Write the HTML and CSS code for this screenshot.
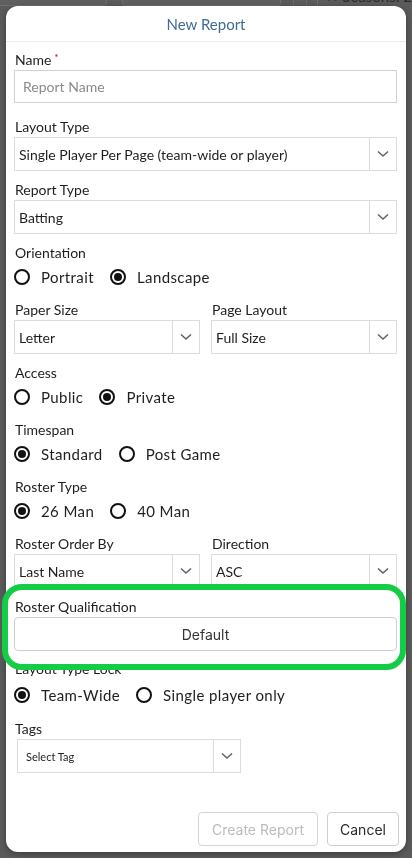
FILE: index.html
```html
<!DOCTYPE html>
<html>
<head>
<meta charset="utf-8">
<link rel="stylesheet" href="styles.css">
</head>
<body>
<div class="page">
  <div class="toolbar">
    <div class="tb-box tb-a"></div>
    <div class="tb-box tb-b"></div>
    <div class="tb-sep"></div>
    <div class="tb-sep"></div>
    <div class="tb-chip">✕ Seasons: 2</div>
  </div>
</div>

<div class="modal">
  <div class="modal-header">New Report</div>
  <div class="modal-body">
    <div class="field field-name">
      <label class="label">Name<span class="req">*</span></label>
      <input class="input" type="text" placeholder="Report Name">
    </div>

    <div class="field">
      <label class="label">Layout Type</label>
      <div class="select">
        <span class="select-value">Single Player Per Page (team-wide or player)</span>
        <span class="select-arrow"><svg width="12" height="8" viewBox="0 0 12 8"><path d="M1 1.5 L6 6 L11 1.5" fill="none" stroke="#5d6572" stroke-width="1.6"/></svg></span>
      </div>
    </div>

    <div class="field">
      <label class="label">Report Type</label>
      <div class="select">
        <span class="select-value">Batting</span>
        <span class="select-arrow"><svg width="12" height="8" viewBox="0 0 12 8"><path d="M1 1.5 L6 6 L11 1.5" fill="none" stroke="#5d6572" stroke-width="1.6"/></svg></span>
      </div>
    </div>

    <div class="field radio-field">
      <label class="label">Orientation</label>
      <div class="radios">
        <span class="radio"><span class="dot"></span>Portrait</span>
        <span class="radio on"><span class="dot"></span>Landscape</span>
      </div>
    </div>

    <div class="field two">
      <div class="col">
        <label class="label">Paper Size</label>
        <div class="select">
          <span class="select-value">Letter</span>
          <span class="select-arrow"><svg width="12" height="8" viewBox="0 0 12 8"><path d="M1 1.5 L6 6 L11 1.5" fill="none" stroke="#5d6572" stroke-width="1.6"/></svg></span>
        </div>
      </div>
      <div class="col">
        <label class="label">Page Layout</label>
        <div class="select">
          <span class="select-value">Full Size</span>
          <span class="select-arrow"><svg width="12" height="8" viewBox="0 0 12 8"><path d="M1 1.5 L6 6 L11 1.5" fill="none" stroke="#5d6572" stroke-width="1.6"/></svg></span>
        </div>
      </div>
    </div>

    <div class="field radio-field">
      <label class="label">Access</label>
      <div class="radios">
        <span class="radio"><span class="dot"></span>Public</span>
        <span class="radio on"><span class="dot"></span>Private</span>
      </div>
    </div>

    <div class="field radio-field">
      <label class="label">Timespan</label>
      <div class="radios">
        <span class="radio on"><span class="dot"></span>Standard</span>
        <span class="radio"><span class="dot"></span>Post Game</span>
      </div>
    </div>

    <div class="field radio-field">
      <label class="label">Roster Type</label>
      <div class="radios">
        <span class="radio on"><span class="dot"></span>26 Man</span>
        <span class="radio"><span class="dot"></span>40 Man</span>
      </div>
    </div>

    <div class="field two">
      <div class="col">
        <label class="label">Roster Order By</label>
        <div class="select">
          <span class="select-value">Last Name</span>
          <span class="select-arrow"><svg width="12" height="8" viewBox="0 0 12 8"><path d="M1 1.5 L6 6 L11 1.5" fill="none" stroke="#5d6572" stroke-width="1.6"/></svg></span>
        </div>
      </div>
      <div class="col">
        <label class="label">Direction</label>
        <div class="select">
          <span class="select-value">ASC</span>
          <span class="select-arrow"><svg width="12" height="8" viewBox="0 0 12 8"><path d="M1 1.5 L6 6 L11 1.5" fill="none" stroke="#5d6572" stroke-width="1.6"/></svg></span>
        </div>
      </div>
    </div>

    <div class="field field-qual">
      <label class="label">Roster Qualification</label>
      <button class="btn btn-block">Default</button>
    </div>

    <div class="field radio-field field-lock">
      <label class="label">Layout Type Lock</label>
      <div class="radios">
        <span class="radio on"><span class="dot"></span>Team-Wide</span>
        <span class="radio"><span class="dot"></span>Single player only</span>
      </div>
    </div>

    <div class="field field-tags">
      <label class="label">Tags</label>
      <div class="select select-tags">
        <span class="select-value">Select Tag</span>
        <span class="select-arrow"><svg width="12" height="8" viewBox="0 0 12 8"><path d="M1 1.5 L6 6 L11 1.5" fill="none" stroke="#5d6572" stroke-width="1.6"/></svg></span>
      </div>
    </div>
  </div>
  <div class="modal-footer">
    <button class="btn btn-disabled">Create Report</button>
    <button class="btn">Cancel</button>
  </div>
  <div class="highlight"></div>
</div>
</body>
</html>
```

FILE: styles.css
```css
* { box-sizing: border-box; }
html, body {
  margin: 0;
  padding: 0;
  width: 412px;
  height: 858px;
  overflow: hidden;
  background: #5b5b5b;
  font-family: Lato, "Open Sans", sans-serif;
}

.page { position: relative; height: 858px; }

.toolbar {
  display: flex;
  align-items: flex-end;
  height: 6px;
  overflow: hidden;
}
.tb-box {
  height: 14px;
  border: 1px solid #6e6e6e;
  border-radius: 3px;
  background: #5f5f5f;
}
.tb-a { width: 112px; margin-left: -4px; }
.tb-b { width: 160px; margin-left: 15px; }
.tb-sep { width: 1px; height: 14px; background: #6a6a6a; margin-left: 12px; }
.tb-chip {
  margin-left: 10px;
  height: 14px;
  line-height: 8px;
  color: #2a2a2a;
  font-size: 15px;
  padding-left: 8px;
  border-left: 1px solid #6e6e6e;
  white-space: nowrap;
}

.modal {
  position: fixed;
  left: 6px;
  top: 6px;
  width: 400px;
  height: 846px;
  background: #fff;
  border-radius: 12px;
  box-shadow: 0 2px 6px rgba(0,0,0,0.35);
  display: flex;
  flex-direction: column;
}

.modal-header {
  height: 36px;
  border-bottom: 1px solid #ececec;
  text-align: center;
  color: #3f6b97;
  font-size: 15px;
  line-height: 37px;
}

.modal-body {
  padding: 9px 9px 0 8px;
  display: flex;
  flex-direction: column;
}

.field { margin-bottom: 10px; }
.field-name { margin-bottom: 15px; }
.radio-field { margin-bottom: 12px; }
.field-qual { margin-bottom: 9px; }
.field-tags { margin-bottom: 0; }

.label {
  display: block;
  height: 18px;
  line-height: 18px;
  font-size: 14px;
  color: #1e1e1e;
  padding-left: 1px;
  margin-bottom: 1px;
}
.req { color: #c4002e; font-size: 10px; vertical-align: top; margin-left: 3px; line-height: 12px; }

.input {
  display: block;
  width: 100%;
  height: 33px;
  border: 1px solid #d2d2d2;
  padding: 0 8px;
  font-family: Lato, sans-serif;
  font-size: 14px;
  color: #222;
  outline: none;
}
.input::placeholder { color: #8a8a8a; }

.select {
  display: flex;
  height: 34px;
  border: 1px solid #dcdcdc;
  background: #fff;
}
.select-value {
  flex: 1;
  display: flex;
  align-items: center;
  padding-left: 4px;
  font-size: 14px;
  color: #1e1e1e;
  white-space: nowrap;
  overflow: hidden;
}
.select-arrow {
  width: 27px;
  border-left: 1px solid #dcdcdc;
  display: flex;
  align-items: center;
  justify-content: center;
}

.two {
  display: grid;
  grid-template-columns: 1fr 1fr;
  column-gap: 11px;
}

.radios {
  display: flex;
  align-items: center;
  height: 24px;
  margin-top: 3px;
  gap: 16px;
}
.field-lock .radios { margin-top: 5px; }
.field-lock { margin-bottom: 13px; }
.radio {
  display: flex;
  align-items: center;
  gap: 11px;
  font-size: 15px;
  letter-spacing: 0.4px;
  color: #1e1e1e;
}
.dot {
  width: 16px;
  height: 16px;
  border: 2px solid #111;
  border-radius: 50%;
  display: flex;
  align-items: center;
  justify-content: center;
}
.radio.on .dot::after {
  content: "";
  width: 8px;
  height: 8px;
  border-radius: 50%;
  background: #111;
}

.btn {
  height: 34px;
  border: 1px solid #cfcfcf;
  border-radius: 4px;
  background: #fff;
  font-family: Inter, "Open Sans", sans-serif;
  font-size: 14px;
  color: #2a2a2a;
  padding: 0 12px;
}
.btn-block { display: block; width: 100%; height: 34px; color: #333; }
.btn-disabled { color: #bcbcbc; border-color: #d4d4d4; }

.select-tags {
  width: 224px;
  margin-left: 3px;
  margin-top: 1px;
}
.select-tags .select-value { font-size: 11px; padding-left: 8px; }

.modal-footer {
  margin-top: auto;
  display: flex;
  justify-content: flex-end;
  gap: 9px;
  padding: 0 7px 6px 0;
}
.modal-footer .btn-disabled { width: 120px; }
.modal-footer .btn:last-child { width: 72px; }

.highlight {
  position: absolute;
  left: -4px;
  top: 578px;
  width: 404px;
  height: 86px;
  border: 6px solid #14cc45;
  border-radius: 20px;
  pointer-events: none;
}
```
